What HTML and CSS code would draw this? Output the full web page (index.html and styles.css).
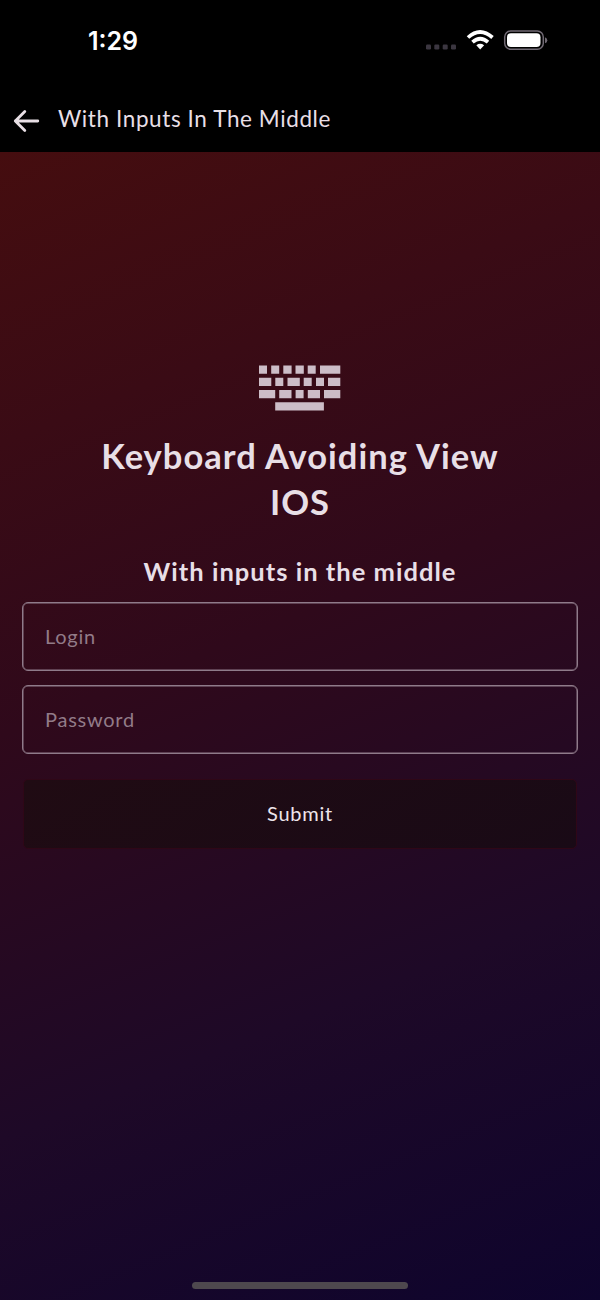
FILE: index.html
```html
<!DOCTYPE html>
<html lang="en">
<head>
<meta charset="utf-8">
<title>Keyboard Avoiding View</title>
<link rel="stylesheet" href="styles.css">
</head>
<body>
<div class="screen">
  <div class="status-bar">
    <span class="time">1:29</span>
    <svg class="status-icons" width="124" height="24" viewBox="0 0 124 24">
      <g fill="#3b3640">
        <rect x="2" y="14.5" width="5" height="5" rx="1.2"/>
        <rect x="10.300" y="14.500" width="5" height="5" rx="1.2"/>
        <rect x="18.700" y="14.500" width="5" height="5" rx="1.2"/>
        <rect x="27" y="14.500" width="5" height="5" rx="1.2"/>
      </g>
      <g fill="none" stroke="#fff" stroke-width="3.700">
        <path d="M44 7.500Q56 -3.500 68.500 7.500"/>
        <path d="M48.500 12.200Q56.200 5.400 64 12.200"/>
      </g>
      <path d="M52.300 15.200Q56.200 12.300 60.100 15.200L56.200 19.500Z" fill="#fff"/>
      <rect x="80.700" y="0.900" width="38.600" height="18.400" rx="6" fill="none" stroke="#716a74" stroke-width="1.500"/>
      <rect x="83" y="3.200" width="33.500" height="13.800" rx="4" fill="#fff"/>
      <path d="M121 7.200Q123.300 8 123.300 10.200Q123.300 12.500 121 13.200Z" fill="#716a74"/>
    </svg>
  </div>
  <header class="nav">
    <svg class="back" width="28" height="24" viewBox="0 0 28 24" fill="none" stroke="#e8dfe5" stroke-width="2.800" stroke-linecap="round" stroke-linejoin="round">
      <path d="M24.800 12H2.300M11.800 2.400L2.300 12L11.800 21.500"/>
    </svg>
    <span class="nav-title">With Inputs In The Middle</span>
  </header>
  <main class="content">
    <svg class="keyboard" width="82" height="46" viewBox="0 0 82 46" fill="#ccbdc7">
      <path d="M0 0.400h8v8.300H0zM12.200 0.400h8v8.300h-8zM24.300 0.400h8.300v8.300h-8.300zM36.500 0.400h8.300v8.300h-8.300zM48.700 0.400h8v8.300h-8zM61 0.400h20.300v8.300H61z"/>
      <path d="M0 12.700h12.300v8.300H0zM16.300 12.700h8v8.300h-8zM28.500 12.700h12.300v8.300H28.500zM44.700 12.700h8v8.300h-8zM57 12.700h8v8.300h-8zM69 12.700h12.300v8.300H69z"/>
      <path d="M0 25h16.200v8.300H0zM20.200 25h12.300v8.300H20.200zM36.600 25h8v8.300h-8zM48.800 25h12.200v8.300H48.800zM65 25h16.300v8.300H65z"/>
      <path d="M16.200 37.200h48.700v8.300H16.200z"/>
    </svg>
    <h1 class="title">Keyboard Avoiding View<br>IOS</h1>
    <h2 class="subtitle">With inputs in the middle</h2>
    <form class="form">
      <input class="field" type="text" placeholder="Login">
      <input class="field password" type="password" placeholder="Password">
      <button class="submit" type="button">Submit</button>
    </form>
  </main>
  <div class="home-indicator"></div>
</div>
</body>
</html>
```

FILE: styles.css
```css
* { box-sizing: border-box; }
body { margin: 0; background: #000; }
.screen {
  width: 600px;
  height: 1300px;
  display: flex;
  flex-direction: column;
  background: #000;
  color: #e8dfe6;
  font-family: Lato, "Open Sans", sans-serif;
  overflow: hidden;
}
.status-bar {
  height: 88px;
  padding: 0 52px 8px 88px;
  display: flex;
  align-items: center;
  justify-content: space-between;
}
.time {
  color: #fff;
  font: 600 25px/30px Inter, sans-serif;
  padding-top: 1px;
}
.status-icons { margin-top: 4px; }
.nav {
  height: 64px;
  padding: 0 12px 2px 13px;
  display: flex;
  align-items: center;
  gap: 17px;
}
.back { margin-top: 3px; }
.nav-title {
  font-size: 22.500px;
  line-height: 30px;
  letter-spacing: 0.600px;
}
.content {
  height: 1148px;
  padding: 213px 22px 0;
  display: flex;
  flex-direction: column;
  align-items: center;
  background: linear-gradient(158deg, #450d0f 0%, #2f091b 42%, #1e0927 71%, #0e042d 100%);
}
.title {
  margin: 22px 0 0;
  font-size: 34.500px;
  line-height: 46px;
  font-weight: 700;
  letter-spacing: 1.020px;
  text-align: center;
}
.subtitle {
  margin: 30px 0 0;
  font-size: 25.500px;
  line-height: 32px;
  font-weight: 700;
  letter-spacing: 1.020px;
}
.form {
  width: 556px;
  margin-top: 15px;
  display: flex;
  flex-direction: column;
}
.field {
  height: 69px;
  padding: 0 22px 1px;
  border: 1.500px solid #8f7b8a;
  border-radius: 6px;
  background: transparent;
  color: #e8dfe6;
  font: 400 20px Lato, sans-serif;
  letter-spacing: 0.750px;
  outline: none;
  box-shadow: inset 0 0 0 0.500px #8f7b8a;
}
.field::placeholder { color: #927b88; opacity: 1; }
.password { margin-top: 14px; }
.submit {
  height: 70px;
  margin: 25px 1px 0;
  padding: 0 0 3px;
  border: 1px solid #2f0717;
  border-radius: 5px;
  background: linear-gradient(152deg, #200b13, #190a16);
  color: #eee5eb;
  font: 400 20px Lato, sans-serif;
  letter-spacing: 0.750px;
}
.home-indicator {
  position: absolute;
  left: 192px;
  top: 1282px;
  width: 216px;
  height: 7px;
  border-radius: 4px;
  background: #4e484e;
}
```
